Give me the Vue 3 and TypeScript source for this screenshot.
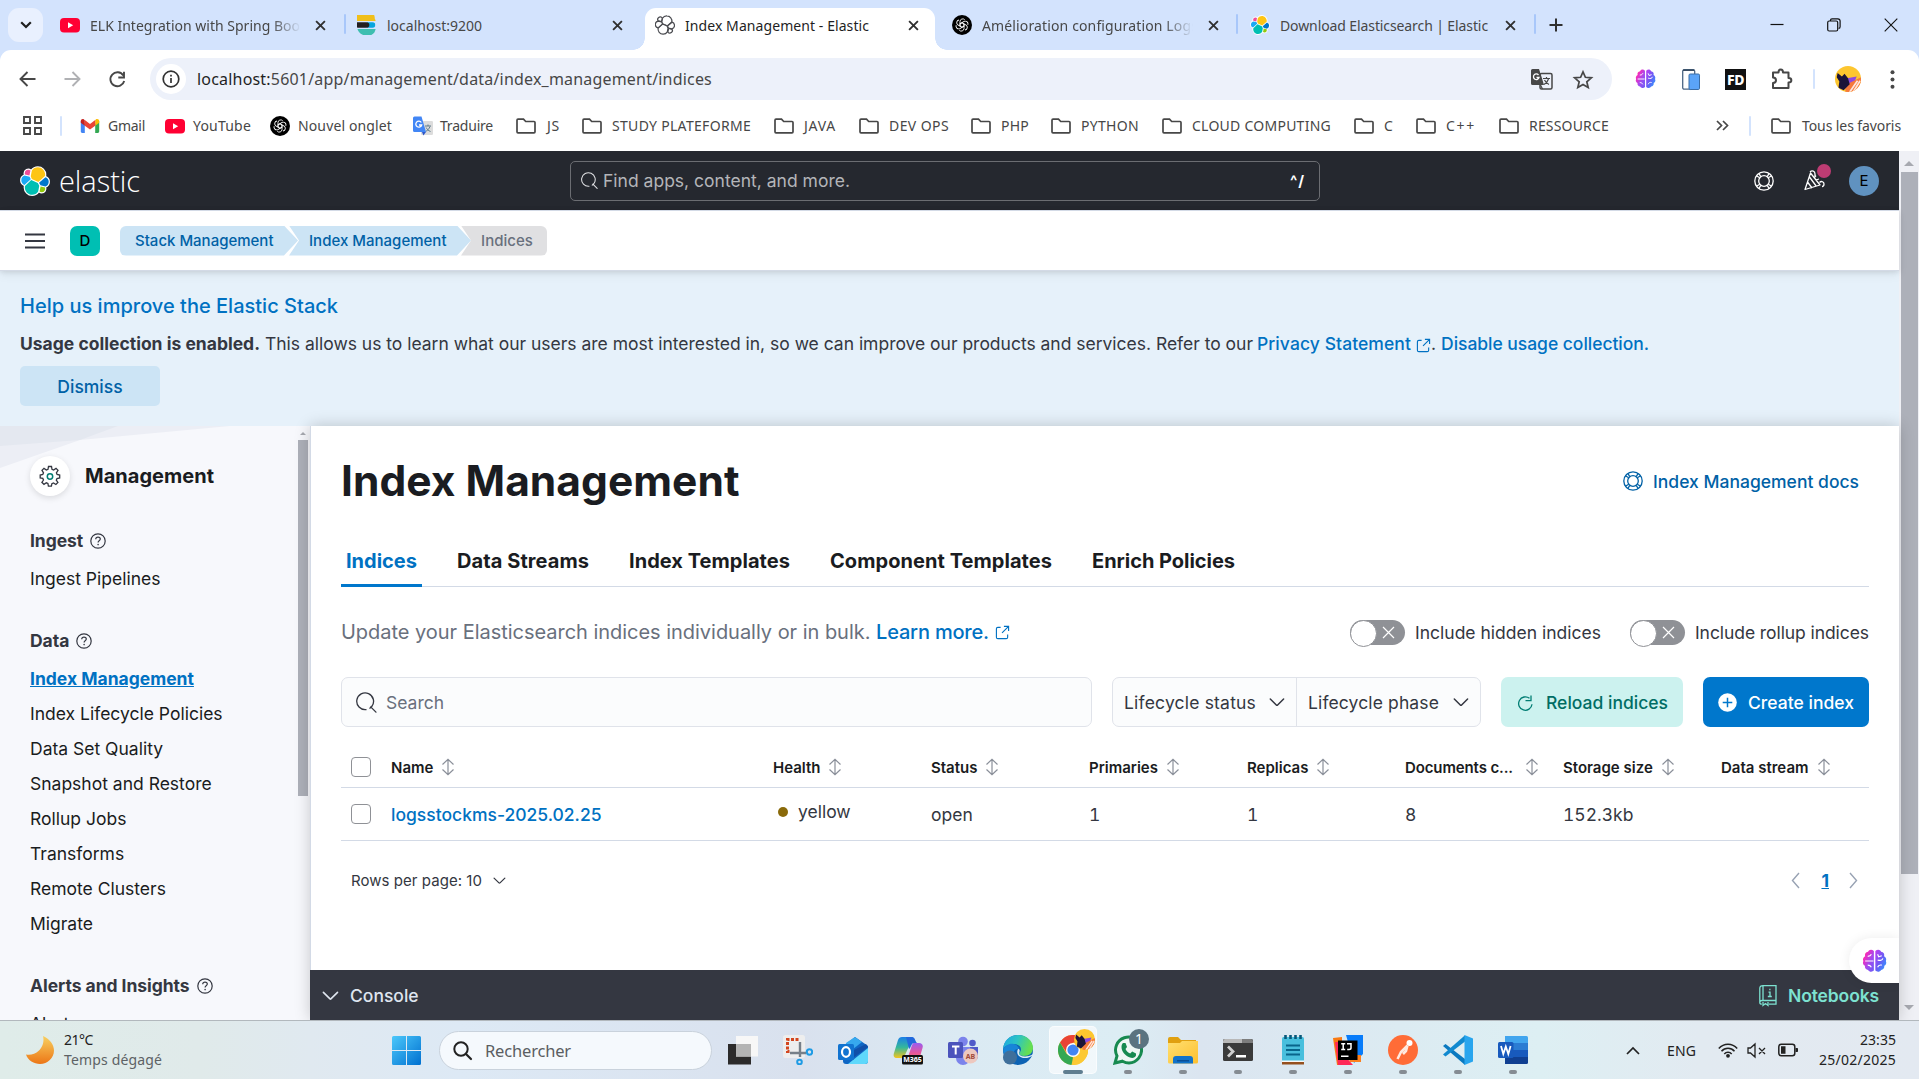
<script setup lang="ts">
interface Tab { title: string; icon: string; start: number; width: number; text: number; active?: boolean; faded?: boolean; line?: boolean }
interface Mark { label: string; icon: string; slot: number; gap: number; text: number }
interface Column { label: string; slot: number; value: string; kind?: string }
interface PageTab { label: string; text: number }

// Stretches or tightens a label's tracking so that it fills the given width.
const vFit = {
  mounted(el: HTMLElement, binding: { value: number }) {
    const natural = el.getBoundingClientRect().width
    const count = (el.textContent ?? '').trim().length
    if (count > 0 && natural > 0) el.style.letterSpacing = `${((binding.value - natural) / count).toFixed(3)}px`
  },
}

const tabs: Tab[] = [
  { title: 'ELK Integration with Spring Boo', icon: 'youtube', start: 11, width: 297, text: 210, faded: true, line: true },
  { title: 'localhost:9200', icon: 'es', start: 11, width: 299, text: 95 },
  { title: 'Index Management - Elastic', icon: 'cluster-line', start: 10, width: 290, text: 184, active: true },
  { title: 'Amélioration configuration Logs', icon: 'gpt', start: 17, width: 303, text: 216, faded: true, line: true },
  { title: 'Download Elasticsearch | Elastic', icon: 'cluster', start: 12, width: 298, text: 208, line: true },
]

const marks: Mark[] = [
  { label: 'Gmail', icon: 'gmail', slot: 85, gap: 8, text: 37 },
  { label: 'YouTube', icon: 'youtube', slot: 105, gap: 8, text: 58 },
  { label: 'Nouvel onglet', icon: 'gpt', slot: 143, gap: 8, text: 94 },
  { label: 'Traduire', icon: 'gtrans', slot: 103, gap: 7, text: 53 },
  { label: 'JS', icon: 'folder', slot: 66, gap: 11, text: 13 },
  { label: 'STUDY PLATEFORME', icon: 'folder', slot: 192, gap: 10, text: 139 },
  { label: 'JAVA', icon: 'folder', slot: 85, gap: 10, text: 32 },
  { label: 'DEV OPS', icon: 'folder', slot: 112, gap: 10, text: 60 },
  { label: 'PHP', icon: 'folder', slot: 80, gap: 10, text: 28 },
  { label: 'PYTHON', icon: 'folder', slot: 111, gap: 10, text: 58 },
  { label: 'CLOUD COMPUTING', icon: 'folder', slot: 192, gap: 10, text: 139 },
  { label: 'C', icon: 'folder', slot: 62, gap: 10, text: 9 },
  { label: 'C++', icon: 'folder', slot: 83, gap: 10, text: 30 },
  { label: 'RESSOURCE', icon: 'folder', slot: 217, gap: 10, text: 80 },
]

const dataLinks: string[] = ['Index Lifecycle Policies', 'Data Set Quality', 'Snapshot and Restore', 'Rollup Jobs', 'Transforms', 'Remote Clusters', 'Migrate']
const pageTabs: PageTab[] = [
  { label: 'Indices', text: 71 },
  { label: 'Data Streams', text: 132 },
  { label: 'Index Templates', text: 161 },
  { label: 'Component Templates', text: 222 },
  { label: 'Enrich Policies', text: 143 },
]

const columns: Column[] = [
  { label: 'Name', slot: 382, value: 'logsstockms-2025.02.25', kind: 'link' },
  { label: 'Health', slot: 158, value: 'yellow', kind: 'health' },
  { label: 'Status', slot: 158, value: 'open' },
  { label: 'Primaries', slot: 158, value: '1' },
  { label: 'Replicas', slot: 158, value: '1' },
  { label: 'Documents c...', slot: 158, value: '8', kind: 'wide' },
  { label: 'Storage size', slot: 158, value: '152.3kb' },
  { label: 'Data stream', slot: 148, value: '' },
]

const apps: string[] = ['taskview', 'snip', 'outlook', 'copilot', 'teams', 'edge', 'chrome', 'whatsapp', 'explorer', 'terminal', 'notepad', 'intellij', 'postman', 'vscode', 'word']
const running = (i: number): boolean => i > 6
</script>

<template>
  <div class="screen">
    <svg class="defs" width="0" height="0" aria-hidden="true">
      <defs>
        <linearGradient id="g-brain" x1="0" y1="0" x2="1" y2="1"><stop offset="0" stop-color="#ff8a1e" /><stop offset=".25" stop-color="#f32bbd" /><stop offset=".6" stop-color="#a04cf0" /><stop offset="1" stop-color="#6a5cf5" /></linearGradient>
        <linearGradient id="g-brain2" x1="0" y1="0" x2="1" y2="1"><stop offset="0" stop-color="#c13df0" /><stop offset=".5" stop-color="#6a5cf5" /><stop offset="1" stop-color="#22a6ff" /></linearGradient>
        <linearGradient id="g-win" x1="0" y1="0" x2="1" y2="1"><stop offset="0" stop-color="#4cc8fb" /><stop offset="1" stop-color="#0070d0" /></linearGradient>
        <linearGradient id="g-moon" x1="0" y1="0" x2="0" y2="1"><stop offset="0" stop-color="#f8d060" /><stop offset="1" stop-color="#ec7616" /></linearGradient>
        <linearGradient id="g-edge" x1="0" y1="0" x2="1" y2=".3"><stop offset="0" stop-color="#1ba4e4" /><stop offset=".5" stop-color="#2cc4c4" /><stop offset="1" stop-color="#66df50" /></linearGradient>
        <linearGradient id="g-cop" x1="0" y1="0" x2="0" y2="1"><stop offset="0" stop-color="#1b7fe8" /><stop offset=".5" stop-color="#35b89a" /><stop offset="1" stop-color="#f5c51c" /></linearGradient>
        <linearGradient id="g-cop2" x1="0" y1="0" x2="0" y2="1"><stop offset="0" stop-color="#9a5cf0" /><stop offset=".5" stop-color="#e8569c" /><stop offset="1" stop-color="#f88a50" /></linearGradient>
        <linearGradient id="g-folder" x1="0" y1="0" x2="1" y2="1"><stop offset="0" stop-color="#ffdf70" /><stop offset="1" stop-color="#fdc02f" /></linearGradient>
        <clipPath id="c-round"><circle cx="15" cy="15" r="15" /></clipPath>
        <clipPath id="c-es"><path d="M17.800 3A10 10 0 100 10a10 10 0 0017.800 7z" /><path d="M10 0A10 10 0 1018.500 15V5A10 10 0 0010 0z" /></clipPath>
      </defs>
      <symbol id="cluster" viewBox="0 0 32 32">
        <g stroke="#fff" stroke-width="2.6" fill="#fff"><path d="M12.58 13.787l7.002 3.211 7.066-6.213a7.849 7.849 0 00.152-1.557c0-4.287-3.477-7.775-7.75-7.775a7.74 7.74 0 00-6.4 3.4l-1.176 6.118z" /><path d="M5.333 21.228A7.964 7.964 0 005.18 22.8c0 4.3 3.487 7.797 7.774 7.797a7.76 7.76 0 006.429-3.415l1.166-6.1-1.556-2.985-7.03-3.215z" /><path d="M5.288 9.067l4.8 1.137L11.14 4.73a3.785 3.785 0 00-6.09 3.03 3.8 3.8 0 00.238 1.306z" /><path d="M4.872 10.214a5.294 5.294 0 00-3.492 4.98 5.287 5.287 0 003.394 4.94l6.733-6.11-1.236-2.653z" /><path d="M20.87 27.184a3.755 3.755 0 002.298.79 3.8 3.8 0 003.555-5.1l-4.798-1.125z" /><path d="M21.848 20.567l5.279 1.237a5.295 5.295 0 003.494-4.98 5.285 5.285 0 00-3.4-4.936l-6.904 6.069z" /></g>
        <path fill="#fec514" d="M12.58 13.787l7.002 3.211 7.066-6.213a7.849 7.849 0 00.152-1.557c0-4.287-3.477-7.775-7.75-7.775a7.74 7.74 0 00-6.4 3.4l-1.176 6.118z" />
        <path fill="#00bfb3" d="M5.333 21.228A7.964 7.964 0 005.18 22.8c0 4.3 3.487 7.797 7.774 7.797a7.76 7.76 0 006.429-3.415l1.166-6.1-1.556-2.985-7.03-3.215z" />
        <path fill="#f04e98" d="M5.288 9.067l4.8 1.137L11.14 4.73a3.785 3.785 0 00-6.09 3.03 3.8 3.8 0 00.238 1.306z" />
        <path fill="#1ba9f5" d="M4.872 10.214a5.294 5.294 0 00-3.492 4.98 5.287 5.287 0 003.394 4.94l6.733-6.11-1.236-2.653z" />
        <path fill="#93c90e" d="M20.87 27.184a3.755 3.755 0 002.298.79 3.8 3.8 0 003.555-5.1l-4.798-1.125z" />
        <path fill="#07c" d="M21.848 20.567l5.279 1.237a5.295 5.295 0 003.494-4.98 5.285 5.285 0 00-3.4-4.936l-6.904 6.069z" />
      </symbol>
      <symbol id="cluster-line" viewBox="0 0 32 32">
        <g fill="#fff" stroke="#4a4b50" stroke-width="1.9" stroke-linejoin="round"><path d="M12 14l7.600 3.400 7.300-6.400a8 8 0 00-7.800-9.500 7.900 7.900 0 00-7.100 3.700l-1.200 6z" /><path d="M5 21a8 8 0 007.900 9.600 7.800 7.800 0 006.800-3.600l1.200-6-1.600-3.300L12 14.500z" /><path d="M5.200 9.500l5.200 1.200 1.200-6.100A3.900 3.900 0 005.200 9.500z" /><path d="M5 9.800a5.500 5.500 0 00-.1 10.800L12 14.300l-1.500-3.300z" /><path d="M20.600 27.300A3.900 3.900 0 0027 22.500l-5.200-1.200z" /><path d="M21.600 21l5.600 1.200a5.600 5.600 0 00.1-10.700L20 17.700z" /></g>
      </symbol>
      <symbol id="es" viewBox="0 0 20 20"><g clip-path="url(#c-es)"><path fill="#f0bf1a" d="M0 0h20v6H0z" /><path fill="#07a5de" d="M10 7.200h5.500a2.800 2.800 0 010 5.600H10z" /><path fill="#231f20" d="M0 7.200h9.500a2.800 2.800 0 010 5.600H0z" /><path fill="#3ebeb0" d="M0 14h20v6H0z" /></g></symbol>
      <symbol id="youtube" viewBox="0 0 20 20"><rect y="3" width="20" height="14.500" rx="4" fill="#ff0033" /><path fill="#fff" d="M8 7.200l5.200 3L8 13.300z" /></symbol>
      <symbol id="gpt" viewBox="0 0 20 20"><circle cx="10" cy="10" r="10" fill="#000" /><g fill="none" stroke="#fff" stroke-width=".9"><path d="M8 6.400V11.100l2 1.200M8 6.400a2.700 2.700 0 014.800-1.500" /><path transform="rotate(60 10 10)" d="M8 6.400V11.100l2 1.200M8 6.400a2.700 2.700 0 014.800-1.500" /><path transform="rotate(120 10 10)" d="M8 6.400V11.100l2 1.200M8 6.400a2.700 2.700 0 014.800-1.500" /><path transform="rotate(180 10 10)" d="M8 6.400V11.100l2 1.200M8 6.400a2.700 2.700 0 014.800-1.500" /><path transform="rotate(240 10 10)" d="M8 6.400V11.100l2 1.200M8 6.400a2.700 2.700 0 014.800-1.500" /><path transform="rotate(300 10 10)" d="M8 6.400V11.100l2 1.200M8 6.400a2.700 2.700 0 014.800-1.500" /></g></symbol>
      <symbol id="gmail" viewBox="0 0 20 20"><path fill="#4285f4" d="M.8 5v10.600c0 .8.6 1.400 1.400 1.400h2.600V8z" /><path fill="#34a853" d="M15.200 8v9h2.600c.8 0 1.400-.6 1.400-1.400V5z" /><path fill="#fbbc04" d="M15.200 4.300v5.400l4-3V5c0-1.900-2-2.600-3.200-1.700z" /><path fill="#c5221f" d="M.8 5v1.700l4 3V4.300L4 3.500C2.800 2.500.8 3.200.8 5z" /><path fill="#ea4335" d="M4.800 9.700V4l5.200 4 5.200-4v5.700L10 13.600z" /></symbol>
      <symbol id="gtrans" viewBox="0 0 20 20"><rect x="8" y="5" width="12" height="14" rx="1.200" fill="#dcdcdc" /><path d="M12 10h6M15 8.500V10M17 10.500c-1 2.500-2.500 4-4.500 5M13.200 11.500c.8 1.800 2 3 4.300 4" stroke="#607d8b" fill="none" /><path fill="#4286f5" d="M1.500.5h7L13 16H1.500A1.500 1.500 0 010 14.500V2A1.500 1.500 0 011.500.5z" /><path fill="#3059c9" d="M9 16h4l-2.600 3.500z" /><path d="M8.300 6.500A3 3 0 108.700 9H6" stroke="#fff" stroke-width="1.300" fill="none" /></symbol>
      <symbol id="folder" viewBox="0 0 20 20"><path d="M1 4.200c0-.6.4-1 1-1h5.500l2.200 2.300H18c.6 0 1 .4 1 1v9.300c0 .6-.4 1-1 1H2c-.6 0-1-.4-1-1z" fill="none" stroke="#474747" stroke-width="1.700" /></symbol>
      <symbol id="brain" viewBox="0 0 24 24"><path fill="url(#g-brain)" d="M11.400 2.500C9.500.6 6.600 1 5.800 3.200 3.500 3.400 2.300 5.500 3 7.400 1 8.500.5 10.600 1.300 12 .4 13.800 1 15.700 2.800 16.600c-.3 2.400 1.300 3.900 3 4 1.200 2 4 2.300 5.600.6z" /><path fill="url(#g-brain2)" d="M12.800 2.500c1.900-1.900 4.800-1.500 5.600.7 2.300.2 3.500 2.300 2.800 4.200 2 1.100 2.500 3.200 1.700 4.600.9 1.800.3 3.700-1.500 4.600.3 2.400-1.300 3.900-3 4-1.200 2-4 2.300-5.600.6z" /><path d="M3 12h8M5.500 7.500c2 0 3-.8 3.500-2M5.500 16c1.500 0 3 1 3.500 2M15 5.500l1 2.500 3-1M15 11c2.500 1 4.500.3 5-1.500M15 18c.5-1.500 2-2.500 4-2" fill="none" stroke="#fff" stroke-width="1.100" /></symbol>
      <symbol id="buoy" viewBox="0 0 20 20"><g fill="none" stroke="currentColor" stroke-width="1.300"><circle cx="10" cy="10" r="9.200" /><circle cx="10" cy="10" r="5.300" /><path d="M4.800 2.400l2 3.200M2.400 4.800l3.300 2M15.200 2.400l-2 3.200M17.600 4.800l-3.300 2M4.800 17.600l2-3.200M2.400 15.200l3.300-2M15.200 17.600l-2-3.200M17.600 15.200l-3.300-2" /></g></symbol>
      <symbol id="sort" viewBox="0 0 14 18"><path d="M7 1.500v15M1.500 6.500L7 1.300l5.500 5.200M1.500 11.500L7 16.700l5.500-5.200" fill="none" stroke="#8a8f99" stroke-width="1.200" /></symbol>
      <symbol id="ask" viewBox="0 0 16 16"><g fill="none" stroke="currentColor" stroke-width="1.200"><circle cx="8" cy="8" r="7.200" /><path d="M5.700 6.200C5.800 4.900 6.700 4.200 8 4.200s2.300.8 2.300 1.900c0 1.700-2.200 1.600-2.200 3.300" /></g><circle cx="8.100" cy="11.600" r=".8" fill="currentColor" /></symbol>
      <symbol id="popout" viewBox="0 0 16 16"><path d="M6 2.500H3C2 2.500 1.500 3 1.500 4v9c0 1 .5 1.500 1.500 1.500h9c1 0 1.500-.5 1.500-1.500v-3M9.500 1.500h5v5M14.500 1.500L7.500 8.500" fill="none" stroke="currentColor" stroke-width="1.200" /></symbol>
      <symbol id="down" viewBox="0 0 16 16"><path d="M1.300 5l6 6c.4.4.9.4 1.300 0l6-6" fill="none" stroke="currentColor" stroke-width="1.500" stroke-linecap="round" /></symbol>
      <symbol id="lens" viewBox="0 0 20 20"><path d="M9.500 16.800A8 8 0 1115 13.800M15 13.800l-1.800 1.600M14 14.200l5 5" fill="none" stroke="currentColor" stroke-width="1.250" stroke-linecap="round" /></symbol>
      <symbol id="x" viewBox="0 0 10 10"><path d="M1 1l8 8M9 1L1 9" fill="none" stroke="#303030" stroke-width="1.700" /></symbol>
      <symbol id="face" viewBox="0 0 30 30"><g clip-path="url(#c-round)"><path fill="#fdc62f" d="M0 0h30v30H0z" /><path fill="#8d4ae0" d="M9 15l16-3-3 8H9z" /><path fill="#f67a3c" d="M12 22l18-9v17H12z" /><path d="M17 30l9-13M21 30l8-13" stroke="#ffe6dc" stroke-width="2" /><path fill="#1c1438" d="M3 8l5 4 3-3 4 5 2 7-3 3-4 4-6-3 1-7-3-5z" /></g></symbol>

      <symbol id="taskview" viewBox="0 0 30 30"><path fill="#2c2b2b" d="M0 9h23v20.500H0z" /><path fill="#f7f7f7" d="M8 1h22v20.500H8z" /><path fill="#b4b4b4" d="M8 9h15v12.500H8z" /></symbol>
      <symbol id="snip" viewBox="0 0 30 30"><rect width="22" height="23" rx="2.500" fill="#eeeeee" /><path d="M15.500 4.500H4.500v12h2" fill="none" stroke="#d3451e" stroke-width="3" stroke-dasharray="3 1.500" /><path d="M17 7v15M7 18h16" stroke="#777f88" stroke-width="2.400" /><circle cx="26.500" cy="17" r="2.700" fill="none" stroke="#1e9be4" stroke-width="2" /><circle cx="16.500" cy="27" r="2.300" fill="none" stroke="#1e9be4" stroke-width="2" /></symbol>
      <symbol id="outlook" viewBox="0 0 30 30"><path fill="#0f66c4" d="M5 11L17 2l13 9v15a3 3 0 01-3 3H8a3 3 0 01-3-3z" /><path fill="#36a9ee" d="M8 8l9-6 7 5-14 11z" /><path fill="#5fd8fb" d="M30 13v13a3 3 0 01-3 3H10z" /><path fill="#104fa8" d="M10 18L28 9l2 3-15 11z" /><rect y="9" width="16" height="16" rx="1.500" fill="#1173d0" /><ellipse cx="8" cy="17" rx="4" ry="4.800" fill="none" stroke="#fff" stroke-width="2.200" /></symbol>
      <symbol id="copilot" viewBox="0 0 30 30"><path fill="url(#g-cop)" d="M9 2h9c2 0 3 1 3.500 3L17 9l-5 11c-1 2-2 3-4 3H4c-3 0-4-2-3-5L5 5c.7-2 2-3 4-3z" /><path fill="url(#g-cop2)" d="M21 8h5c3 0 4.500 2 3.500 5L26 25c-.7 2-2 3-4 3h-9l5-15c1-3 1.500-5 3-5z" /><path fill="#2269dc" d="M13 2h6c3 0 3 4 5 6h-3c-3 0-3 5-5 6z" /><rect x="9" y="20" width="21" height="9.500" rx="1.500" fill="#111" /></symbol>
      <symbol id="teams" viewBox="0 0 30 30"><circle cx="15" cy="6.500" r="4.800" fill="#7b83eb" /><circle cx="24.500" cy="8" r="3.300" fill="#5059c9" /><path fill="#5059c9" d="M18 12h12v9a6 6 0 01-9 5z" /><path fill="#7b83eb" d="M8 12h14v11a7 7 0 01-14 0z" /><rect y="7" width="15" height="16" rx="1.500" fill="#4b53bc" /><path d="M4 11.500h7.400M7.700 11.500v8" stroke="#fff" stroke-width="2" /><circle cx="22.500" cy="21" r="7.500" fill="#edc8bf" /></symbol>
      <symbol id="edge" viewBox="0 0 30 30"><circle cx="15" cy="15" r="15" fill="#0d63b4" /><path fill="url(#g-edge)" d="M0 14C1 5 7 0 15 0c9 0 15 6 15 13 0 5-4 8-9 8-4 0-6-2-4-4 3-4-1-8-6-8-6 0-10 3-11 5z" /><path fill="#1885d8" d="M0 15c2-5 7-7 11-6 3 1 5 3 5 5-5-1-8 5-3 11-7 2-12-3-13-10z" /><path fill="#dcecf4" d="M15 14c2 0 2 2 1 4 0 2 2 3.500 6 3.500 3 0 5.500-.5 8.500-2.500-2 3-5 4-9 4-5 0-9-4-6.500-9z" /><circle cx="7" cy="22.500" r="7" fill="#3f6f9b" /></symbol>
      <symbol id="chrome" viewBox="0 0 30 30"><circle cx="15" cy="15" r="15" fill="#fcc934" /><path fill="#ea4335" d="M2 7.500A15 15 0 0128 7.500H15L9 18z" /><path fill="#34a853" d="M2 7.500L8.500 18.800 15 22.500 13.500 30A15 15 0 012 7.500z" /><path fill="#fcc934" d="M28 7.500A15 15 0 0114 30l7.500-11.300V7.500z" /><circle cx="15" cy="15" r="7" fill="#fff" /><circle cx="15" cy="15" r="5.600" fill="#4285f4" /></symbol>
      <symbol id="whatsapp" viewBox="0 0 30 30"><path d="M2 28l2-7A13 13 0 1116 28c-2.500 0-4.500-.7-6.500-1.800z" fill="#eef7f4" stroke="#178a50" stroke-width="3" /><path fill="#178a50" d="M10 8h2.500l1.500 4-1.500 2c1 2.200 2.500 3.600 4.700 4.500l2-2 3.800 2v2c-.8 2.200-3.500 3-6 2-5-2-8.500-6-8.500-10.500 0-1.700.5-3 1.500-4z" /></symbol>
      <symbol id="explorer" viewBox="0 0 30 30"><path fill="#e0a010" d="M0 4a2 2 0 012-2h8l3 3h15v8H0z" /><path fill="url(#g-folder)" d="M0 8h12l2-2h16v21a1.500 1.500 0 01-1.500 1.500h-27A1.500 1.500 0 010 27z" /><path fill="#1273ca" d="M5 28.500V24a3 3 0 013-3h14a3 3 0 013 3v4.500z" /><path fill="#0b4f96" d="M9 25h12v1.500H9z" /></symbol>
      <symbol id="terminal" viewBox="0 0 30 30"><rect y="4" width="30" height="22" rx="1.500" fill="#3a3a3a" /><path fill="#b8b8b8" d="M1.500 4h18v4H0V5.500z" /><path fill="#7d7d7d" d="M19.500 4h9L30 5.500V8H19.500z" /><path d="M5 11.500l5 5-5 5" fill="none" stroke="#d0d0d0" stroke-width="2.800" /><path fill="#fff" d="M13 20h10v2.500H13z" /></symbol>
      <symbol id="notepad" viewBox="0 0 30 30"><rect x="4" y="2" width="22" height="27" rx="1.500" fill="#48bfdd" /><path fill="#f8f8f8" d="M4 25.500h22V27H4z" /><path fill="#95501f" d="M4 27h22v2.500H4z" /><path d="M8 10.500h14M8 15h14M8 19.500h14" stroke="#08658b" stroke-width="1.800" /><path d="M7.500 0v4M12.500 0v4M17.500 0v4M22.500 0v4" stroke="#08587a" stroke-width="2.600" /></symbol>
      <symbol id="intellij" viewBox="0 0 30 30"><path fill="#f97a12" d="M0 3l9-1v28H4z" /><path fill="#fe2857" d="M2 7h10v14l8 9H5z" /><path fill="#087cfa" d="M13 0h17v19l-9 9z" /><path fill="#fc801d" d="M14 20h14v7H17z" /><path d="M5 5.500h19.500v19.500H5z" /><path fill="#fff" d="M8 20.500h7.500V22H8z" /><path d="M8.200 8.800h4M8.200 14.500h4M10.200 8.800v5.700M14 8.800h4v4.300c0 1-.7 1.500-2 1.500h-1.800" fill="none" stroke="#fff" stroke-width="1.500" /></symbol>
      <symbol id="postman" viewBox="0 0 30 30"><circle cx="15" cy="15" r="15" fill="#ff6c37" /><circle cx="21.500" cy="8" r="3" fill="#fff" /><path d="M19.500 10.500L13 17l-3.500 7M19.500 10.500L18 16l-3 3" stroke="#ffeae0" stroke-width="2.500" fill="none" /></symbol>
      <symbol id="vscode" viewBox="0 0 30 30"><path fill="#0a79c0" d="M0 11l2.500-2L22 24v6z" /><path fill="#1089cf" d="M0 19.500l2.500 2L22 6.500V.3z" /><path fill="#28a5ee" d="M21.500 0L30 3.500v23L21.500 30z" /></symbol>
      <symbol id="word" viewBox="0 0 30 30"><path fill="#41a5ee" d="M7 1h21.500a1.500 1.500 0 011.500 1.500V8H7z" /><path fill="#2b7cd3" d="M7 8h23v7H7z" /><path fill="#185abd" d="M7 15h23v7H7z" /><path fill="#103f91" d="M7 22h23v5.500a1.500 1.500 0 01-1.500 1.500H7z" /><rect y="7" width="15.500" height="16" rx="1.500" fill="#185abd" /><path d="M3 11l2.300 8 2.500-7.500 2.500 7.500 2.300-8" fill="none" stroke="#fff" stroke-width="1.800" /></symbol>
    </svg>

    <header class="tabstrip">
      <button class="tab-menu"><svg width="12" height="8" viewBox="0 0 12 8"><path d="M1.200 1.200L6 6l4.800-4.800" fill="none" stroke="#1f1f1f" stroke-width="2.200" /></svg></button>
      <div v-for="t in tabs" :key="t.title" class="tab" :class="{ active: t.active }" :style="{ width: t.width + 'px', paddingLeft: t.start + 'px' }">
        <svg class="favicon"><use :href="'#' + t.icon" /></svg>
        <span class="tab-title" :class="{ faded: t.faded }"><span v-fit="t.text" class="fit">{{ t.title }}</span></span>
        <svg class="tab-close" width="11" height="11"><use href="#x" /></svg>
        <i v-if="t.line" class="tab-line" />
      </div>
      <svg class="plus" width="14" height="14" viewBox="0 0 14 14"><path d="M7 .5v13M.5 7h13" stroke="#303030" stroke-width="2" /></svg>
      <div class="window-buttons">
        <svg width="14" height="14" viewBox="0 0 14 14"><path d="M.5 6.500h13" stroke="#111" stroke-width="1.200" /></svg>
        <svg width="14" height="14" viewBox="0 0 14 14"><g fill="none" stroke="#111" stroke-width="1.200"><rect x=".7" y="3" width="10" height="10" rx="1.500" /><path d="M3.500 3V2.200C3.500 1.300 4 .8 5 .8h5.800c1.500 0 2.300.9 2.300 2.300v5.700c0 1-.6 1.600-1.500 1.600" /></g></svg>
        <svg width="14" height="14" viewBox="0 0 14 14"><path d="M.7.7l12.600 12.600M13.300.7L.7 13.300" stroke="#111" stroke-width="1.100" /></svg>
      </div>
    </header>

    <div class="toolbar">
      <svg class="nav-back" width="17" height="16" viewBox="0 0 17 16"><path d="M16.500 8H1.500M8.500 1L1.500 8l7 7" fill="none" stroke="#474747" stroke-width="1.900" /></svg>
      <svg class="nav-next" width="17" height="16" viewBox="0 0 17 16"><path d="M.5 8h15M8.500 1l7 7-7 7" fill="none" stroke="#b0b1b4" stroke-width="1.900" /></svg>
      <svg class="nav-reload" width="17" height="17" viewBox="0 0 17 17"><path d="M14.300 4.500A7 7 0 1015.200 10M15 .8v5.700H9.300" fill="none" stroke="#474747" stroke-width="1.900" /></svg>
      <div class="omnibox">
        <span class="site-info"><svg width="18" height="18" viewBox="0 0 18 18"><circle cx="9" cy="9" r="7.800" fill="none" stroke="#333" stroke-width="1.700" /><path d="M9 8v5M9 4.800v1.700" stroke="#333" stroke-width="1.700" /></svg></span>
        <span v-fit="515" class="url"><b>localhost:</b>5601/app/management/data/index_management/indices</span>
        <svg class="translate" width="22" height="21" viewBox="0 0 22 21"><rect x="9" y="4.500" width="12" height="15.500" rx="1.500" fill="none" stroke="#474747" stroke-width="1.500" /><path fill="#474747" d="M1.500 0H8l1.500 4.500L13 16H1.500A1.500 1.500 0 010 14.500v-13A1.500 1.500 0 011.500 0z" /><path d="M7.500 6A2.800 2.800 0 108 8.500H5.500" fill="none" stroke="#fff" stroke-width="1.300" /><path d="M12 9.500h7M15.500 8v1.500M17.500 10c-1 3-2.500 4.500-4.500 5.500M13.500 11c1 2 2.300 3.500 4.500 4.500M9.500 16l2 4" fill="none" stroke="#474747" stroke-width="1.200" /></svg>
        <svg class="star" width="20" height="19" viewBox="0 0 20 19"><path d="M10 1.800l2.400 5.500 6 .5-4.600 4 1.400 5.800L10 14.500l-5.200 3.100 1.400-5.800-4.600-4 6-.5z" fill="none" stroke="#474747" stroke-width="1.700" /></svg>
      </div>
      <svg class="ext-brain" width="21" height="22"><use href="#brain" /></svg>
      <svg class="ext-phone" width="18" height="21" viewBox="0 0 18 21"><rect x=".7" y=".7" width="12" height="19.500" rx="1.500" fill="#fff" stroke="#4c6684" stroke-width="1.300" /><path d="M1 1.200h11" stroke="#31455c" stroke-width="1.500" /><rect x="7" y="5" width="10.500" height="15.500" rx="1.200" fill="#5ba4f8" stroke="#3b6da5" /></svg>
      <span class="ext-fd">FD</span>
      <svg class="ext-puzzle" width="22" height="22" viewBox="0 0 22 22"><path d="M2 4.500h5.500c0-4 4.500-4 4.500 0h5.500V10c3.800 0 3.800 4.500 0 4.500v5.500H2v-5c4-.3 4-5.200 0-5.500z" fill="none" stroke="#474747" stroke-width="2" stroke-linejoin="round" /></svg>
      <i class="bar-line" />
      <svg class="profile" width="26" height="26"><use href="#face" /></svg>
      <svg class="dots" width="5" height="19" viewBox="0 0 5 19"><g fill="#474747"><circle cx="2.500" cy="2.300" r="2" /><circle cx="2.500" cy="9.500" r="2" /><circle cx="2.500" cy="16.700" r="2" /></g></svg>
    </div>

    <nav class="bookmarks">
      <svg class="apps" width="19" height="19" viewBox="0 0 19 19"><g fill="none" stroke="#474747" stroke-width="1.900"><path d="M1 1h6v6H1zM12 1h6v6h-6zM1 12h6v6H1zM12 12h6v6h-6z" /></g></svg>
      <i class="bar-line" />
      <div v-for="m in marks" :key="m.label" class="mark" :style="{ width: m.slot + 'px', columnGap: m.gap + 'px' }">
        <svg width="20" height="20"><use :href="'#' + m.icon" /></svg><span v-fit="m.text" class="fit">{{ m.label }}</span>
      </div>
      <svg class="more" width="13" height="11" viewBox="0 0 13 11"><path d="M1 1l4.500 4.500L1 10M7 1l4.500 4.500L7 10" fill="none" stroke="#474747" stroke-width="1.700" /></svg>
      <i class="bar-line last" />
      <div class="mark all"><svg width="20" height="20"><use href="#folder" /></svg><span v-fit="99" class="fit">Tous les favoris</span></div>
    </nav>

    <div class="viewport">
      <div class="page">
        <div class="topbar">
          <svg class="logo" width="30" height="30"><use href="#cluster" /></svg>
          <span class="brand"><span v-fit="81" class="fit">elastic</span></span>
          <div class="global-search">
            <svg width="17" height="17"><use href="#lens" /></svg><span v-fit="247" class="fit">Find apps, content, and more.</span><b>^/</b>
          </div>
          <svg class="help" width="20" height="20"><use href="#buoy" /></svg>
          <div class="news">
            <svg width="21" height="21" viewBox="0 0 21 21"><g fill="none" stroke="#fff" stroke-width="1.300" stroke-linejoin="round"><path d="M6.500 3L1 19.500l15-4.500zM5.500 7l7 9.500M3.500 12l4.500 6M6 2c2-2 5-1 5 2v2M10 8l2-2.500M12 10l3-1M15.500 12.500c2-2 4.500-.5 4.500 1.500 0 1.500-1 2.500-2 2.500" /></g></svg><i />
          </div>
          <span class="user">E</span>
        </div>

        <div class="crumbbar">
          <svg class="burger" width="20" height="16" viewBox="0 0 20 16"><path d="M0 1.500h20M0 8h20M0 14.500h20" stroke="#343741" stroke-width="2.200" /></svg>
          <span class="space">D</span>
          <div class="crumbs">
            <span class="crumb first"><span v-fit="138.500" class="fit">Stack Management</span></span>
            <span class="crumb mid"><span v-fit="137.500" class="fit">Index Management</span></span>
            <span class="crumb end"><span v-fit="52" class="fit">Indices</span></span>
          </div>
        </div>

        <section class="banner">
          <h2><span v-fit="318" class="fit">Help us improve the Elastic Stack</span></h2>
          <p><b v-fit="240">Usage collection is enabled.</b><span v-fit="988" class="body">This allows us to learn what our users are most interested in, so we can improve our products and services. Refer to our</span><a v-fit="154">Privacy Statement</a><svg width="15" height="15"><use href="#popout" /></svg><span class="stop">.</span><a v-fit="208">Disable usage collection.</a></p>
          <button>Dismiss</button>
        </section>

        <div class="split">
          <aside class="side">
            <svg class="art" width="230" height="45" viewBox="0 0 230 45"><path fill="#eceef5" d="M0 0h230L80 14 0 42z" /><path fill="#e4e8f0" d="M0 0h118L80 14 0 20z" /></svg>
            <div class="side-scroll"><span /><i /></div>
            <div class="side-body">
              <div class="side-head">
                <span class="gear"><svg width="22" height="22" viewBox="0 0 22 22"><path d="M9.500 1.500h3l.5 2.800 1.600.7 2.400-1.600 2 2-1.600 2.400.7 1.700 2.600.5v3l-2.700.5-.7 1.600 1.600 2.300-2 2.100-2.400-1.600-1.600.7-.5 2.600h-3l-.5-2.700-1.600-.7L5 19.400l-2.100-2.100L4.500 15l-.7-1.600L1.200 13v-3l2.600-.5.7-1.700L3 5.400l2-2L7.400 5 9 4.300z" fill="none" stroke="#343741" stroke-width="1.300" /><circle cx="11" cy="11.500" r="2.700" fill="none" stroke="#017d73" stroke-width="1.500" /></svg></span>
                <span class="side-title"><span v-fit="129" class="fit">Management</span></span>
              </div>
              <h3 class="g1">Ingest<svg width="16" height="16"><use href="#ask" /></svg></h3>
              <a>Ingest Pipelines</a>
              <h3 class="g2">Data<svg width="16" height="16"><use href="#ask" /></svg></h3>
              <a class="current">Index Management</a>
              <a v-for="l in dataLinks" :key="l">{{ l }}</a>
              <h3 class="g3">Alerts and Insights<svg width="16" height="16"><use href="#ask" /></svg></h3>
              <a>Alerts</a>
            </div>
          </aside>

          <div class="panel">
            <main class="content">
              <div class="title-row">
                <h1><span v-fit="398.500" class="fit">Index Management</span></h1>
                <a class="docs"><svg width="20" height="20"><use href="#buoy" /></svg><span v-fit="206" class="fit">Index Management docs</span></a>
              </div>
              <div class="page-tabs"><span v-for="(p, i) in pageTabs" :key="p.label" :class="{ on: i === 0 }"><em v-fit="p.text" class="fit">{{ p.label }}</em></span></div>
              <div class="intro">
                <p><span v-fit="535" class="body">Update your Elasticsearch indices individually or in bulk. </span><a><span v-fit="113" class="fit">Learn more.</span><svg width="15" height="15"><use href="#popout" /></svg></a></p>
                <label><i class="switch"><svg width="13" height="13" viewBox="0 0 13 13"><path d="M1 1l11 11M12 1L1 12" stroke="#fff" stroke-width="1.200" /></svg></i><span v-fit="186" class="fit">Include hidden indices</span></label>
                <label><i class="switch"><svg width="13" height="13" viewBox="0 0 13 13"><path d="M1 1l11 11M12 1L1 12" stroke="#fff" stroke-width="1.200" /></svg></i><span v-fit="174" class="fit">Include rollup indices</span></label>
              </div>
              <div class="filters">
                <div class="find"><svg width="21" height="21"><use href="#lens" /></svg>Search</div>
                <div class="group">
                  <span><em v-fit="132">Lifecycle status</em><svg width="16" height="16"><use href="#down" /></svg></span>
                  <span><em v-fit="131">Lifecycle phase</em><svg width="16" height="16"><use href="#down" /></svg></span>
                </div>
                <button class="reload"><svg width="17" height="17" viewBox="0 0 17 17"><path d="M15 9.500A6.700 6.700 0 1112.500 3.500M8.500 5.800H14V.8" fill="none" stroke="#017d73" stroke-width="1.300" transform="translate(0 .8)" /></svg><span v-fit="122" class="fit">Reload indices</span></button>
                <button class="create"><svg width="19" height="19" viewBox="0 0 19 19"><circle cx="9.500" cy="9.500" r="9.300" fill="#fff" /><path d="M9.500 4.700v9.600M4.700 9.500h9.600" stroke="#07c" stroke-width="1.500" /></svg><span v-fit="106" class="fit">Create index</span></button>
              </div>
              <div class="table">
                <div class="tr head"><i class="box" /><span v-for="c in columns" :key="c.label" :class="c.kind" :style="{ width: c.slot + 'px' }">{{ c.label }}<svg width="14" height="18"><use href="#sort" /></svg></span></div>
                <div class="tr row"><i class="box" /><span v-for="c in columns" :key="c.label" :class="c.kind" :style="{ width: c.slot + 'px' }"><i v-if="c.kind === 'health'" class="dot" />{{ c.value }}</span></div>
              </div>
              <div class="pager">
                <span class="rows">Rows per page: 10<svg width="13" height="13"><use href="#down" /></svg></span>
                <svg width="9" height="17" viewBox="0 0 9 17"><path d="M8 1L1.500 8.500 8 16" fill="none" stroke="#98a2b3" stroke-width="1.400" /></svg>
                <b>1</b>
                <svg width="9" height="17" viewBox="0 0 9 17"><path d="M1 1l6.500 7.500L1 16" fill="none" stroke="#98a2b3" stroke-width="1.400" /></svg>
              </div>
            </main>
            <div class="console">
              <svg width="17" height="17"><use href="#down" /></svg><span>Console</span>
              <svg class="book" width="18" height="21" viewBox="0 0 18 21"><path d="M4 .7h13v18.500H10M4 .7C2 .7.8 1.500.8 3.500v14c0 1 .7 1.700 2 1.700M4 .7v15M1 17c0-1 .8-1.500 2-1.500h14M4 17v3.500l2.500-2 2.500 2V17M9.500 7.200h1.500v4.300M8.800 11.500h4M10.300 4.500h1.200" fill="none" stroke="#7de2d1" stroke-width="1.300" /></svg>
              <span class="note"><span v-fit="91" class="fit">Notebooks</span></span>
            </div>
            <div class="assistant"><svg width="25" height="26"><use href="#brain" /></svg></div>
          </div>
        </div>
      </div>
      <div class="scrollbar"><span class="up" /><i /><span class="dn" /></div>
    </div>

    <footer class="taskbar">
      <svg class="moon" width="28" height="28" viewBox="0 0 28 28"><path fill="url(#g-moon)" d="M17 0c7 3 11 9 11 14.500C28 22 21.500 28 14 28 8 28 2 24.500 0 18.500c4 .8 9 0 13-4C17 10.500 18.300 5 17 0z" /></svg>
      <div class="weather"><span v-fit="29" class="fit">21°C</span><span v-fit="98" class="fit sub">Temps dégagé</span></div>
      <svg class="start" width="29" height="29" viewBox="0 0 29 29"><path fill="url(#g-win)" d="M0 1.500A1.500 1.500 0 011.500 0H14v14H0zM15 0h12.500A1.500 1.500 0 0129 1.500V14H15zM0 15h14v14H1.500A1.500 1.500 0 010 27.500zM15 15h14v12.500a1.500 1.500 0 01-1.500 1.500H15z" /></svg>
      <div class="task-search"><svg width="19" height="19" viewBox="0 0 19 19"><circle cx="8" cy="8" r="6.700" fill="none" stroke="#222" stroke-width="2" /><path d="M13 13l5 5" stroke="#222" stroke-width="2.200" stroke-linecap="round" /></svg><span v-fit="86" class="fit">Rechercher</span></div>
      <div class="apps-row">
        <div v-for="(a, i) in apps" :key="a" class="app" :class="[a, { running: running(i) }]">
          <svg width="30" height="30"><use :href="'#' + a" /></svg>
          <span v-if="a === 'copilot'" class="m365">M365</span>
          <span v-if="a === 'teams'" class="ab">AB</span>
          <svg v-if="a === 'chrome'" class="mini"><use href="#face" /></svg>
          <span v-if="a === 'whatsapp'" class="count">1</span>
          <i class="mark-run" />
        </div>
      </div>
      <svg class="caret" width="14" height="9" viewBox="0 0 14 9"><path d="M1 8l6-6 6 6" fill="none" stroke="#222" stroke-width="1.700" /></svg>
      <span class="lang"><span v-fit="29" class="fit">ENG</span></span>
      <svg class="wifi" width="20" height="15" viewBox="0 0 20 15"><g fill="none" stroke="#222" stroke-width="1.500"><path d="M.8 5.500C5.800-.2 14.200-.2 19.200 5.500M3.500 8.300c3.500-4 9.500-4 13 0M6.300 11c2-2.300 5.400-2.300 7.400 0" /></g><circle cx="10" cy="12.800" r="1.900" fill="#222" /></svg>
      <svg class="mute" width="20" height="15" viewBox="0 0 20 15"><path d="M1 5v5h2.500L8 14V1L3.500 5zM12 5l6 6M18 5l-6 6" fill="none" stroke="#222" stroke-width="1.300" /></svg>
      <svg class="battery" width="20" height="14" viewBox="0 0 20 14"><rect x=".8" y="1.300" width="16" height="11.400" rx="2.500" fill="none" stroke="#222" stroke-width="1.500" /><path fill="#222" d="M3 3.300h4.500v7.400H3zM17.500 5H19c.6 0 1 .4 1 1v2c0 .6-.4 1-1 1h-1.500z" /></svg>
      <div class="clock"><span v-fit="36" class="fit">23:35</span><span v-fit="77" class="fit">25/02/2025</span></div>
    </footer>
  </div>
</template>

<style>
html, body { margin: 0; overflow: hidden; }
</style>

<style scoped>
* { box-sizing: border-box; }
.screen { width: 1919px; height: 1079px; display: flex; flex-direction: column; overflow: hidden; background: #d3e3fd; font-family: 'Noto Sans', 'Open Sans', sans-serif; font-size: 14px; color: #474747; }
svg { flex: none; display: block; overflow: visible; }
.defs { position: absolute; }
h1, h2, h3, p { margin: 0; }
button { border: 0; padding: 0; font: inherit; color: inherit; display: flex; align-items: center; }
.fit, .url { white-space: nowrap; display: inline-block; }
em, i { font-style: normal; }

.tabstrip { height: 50px; flex: none; display: flex; align-items: flex-start; padding-left: 8px; }
.tab-menu { width: 35px; height: 34px; margin: 8px 6px 0 0; border-radius: 11px; background: #e9f0fe; justify-content: center; }
.tab { position: relative; height: 42px; margin-top: 8px; display: flex; align-items: center; padding-bottom: 8px; flex: none; }
.tab.active { background: #fff; border-radius: 11px 11px 0 0; color: #1f1f1f; }
.tab.active::before, .tab.active::after { content: ''; position: absolute; bottom: 0; width: 12px; height: 12px; }
.tab.active::before { left: -12px; background: radial-gradient(circle at 0 0, transparent 11.5px, #fff 12px); }
.tab.active::after { right: -12px; background: radial-gradient(circle at 100% 0, transparent 11.5px, #fff 12px); }
.favicon { width: 20px; height: 20px; margin-right: 10px; }
.tab-title { width: 211px; overflow: hidden; white-space: nowrap; }
.tab-title.faded { mask-image: linear-gradient(90deg, #000 86%, transparent 100%); }
.tab-close { position: absolute; right: 16px; top: 12px; }
.tab:nth-child(2) .tab-close { right: 20px; }
.tab:nth-child(3) .tab-close { right: 22px; }
.tab:nth-child(5) .tab-close { right: 19px; }
.tab:nth-child(6) .tab-close { right: 20px; }
.tab-line { position: absolute; right: 0; top: 6px; width: 2px; height: 20px; background: #a8c7fa; border-radius: 1px; }
.plus { margin: 18px 0 0 13px; }
.window-buttons { margin: 18px 21px 0 auto; display: flex; gap: 43px; }

.toolbar { height: 50px; flex: none; background: #fff; border-radius: 11px 11px 0 0; display: flex; align-items: center; padding: 8px 0 0 19px; }
.nav-next { margin-left: 28px; }
.nav-reload { margin-left: 28px; }
.omnibox { width: 1462px; height: 42px; flex: none; margin-left: 24px; border-radius: 21px; background: #edf1fa; display: flex; align-items: center; padding-left: 6px; }
.site-info { width: 30px; height: 30px; border-radius: 50%; background: #fff; display: flex; align-items: center; justify-content: center; margin-right: 11px; }
.url { font-size: 16px; color: #474747; }
.url b { font-weight: 400; color: #1f1f1f; }
.translate { margin-left: auto; }
.star { margin: 0 19px 0 20px; }
.ext-brain { margin-left: 23px; }
.ext-phone { margin-left: 26px; }
.ext-fd { width: 21px; height: 21px; margin-left: 25px; background: #111; color: #fff; font: 800 14px/21px 'Noto Sans', sans-serif; text-align: center; letter-spacing: -0.5px; }
.ext-puzzle { margin-left: 25px; }
.bar-line { width: 2px; height: 20px; background: #d3e3fd; border-radius: 1px; flex: none; }
.toolbar .bar-line { margin-left: 20px; }
.profile { margin-left: 20px; }
.dots { margin-left: 29px; }

.bookmarks { height: 51px; flex: none; background: #fff; display: flex; align-items: center; padding-left: 23px; }
.apps { margin-right: 18px; }
.bookmarks .bar-line { margin-right: 18px; }
.mark { display: flex; align-items: center; flex: none; white-space: nowrap; }
.bookmarks .last { margin: 0 20px; }
.mark.all { column-gap: 11px; }

.viewport { height: 869px; flex: none; display: flex; background: #fff; overflow: hidden; font-family: Inter, sans-serif; font-size: 17.5px; color: #343741; }
.page { width: 1899px; display: flex; flex-direction: column; }
.scrollbar { width: 20px; background: #eff0f5; display: flex; flex-direction: column; align-items: center; padding: 10px 0; }
.scrollbar i { width: 17px; height: 702px; margin-top: 6px; background: #adb0b9; }
.up, .dn { border: 5px solid transparent; border-top: 0; border-bottom-color: #a7a9b0; }
.dn { margin-top: auto; border-top: 5px solid #a7a9b0; border-bottom: 0; }

.topbar { height: 59px; flex: none; background: #25282f; display: flex; align-items: center; padding-left: 20px; }
.brand { width: 83px; margin: 0 0 0 9px; color: #fff; font: 300 29px/40px 'Open Sans', 'Noto Sans', sans-serif; }
.global-search { width: 750px; height: 40px; margin-left: 428px; border: 1px solid #6b6d72; border-radius: 5px; display: flex; align-items: center; padding: 0 14px 0 10px; color: #b4b5b9; }
.global-search span { margin-left: 5px; }
.global-search svg { color: #dfe0e3; }
.global-search b { margin-left: auto; font-size: 15px; color: #fff; letter-spacing: 1px; }
.help { margin-left: 434px; color: #fff; }
.news { position: relative; margin-left: 30px; }
.news i { position: absolute; width: 14px; height: 14px; border-radius: 50%; background: #bd3c73; left: 13px; top: -6px; }
.user { width: 30px; height: 30px; margin-left: 24px; border-radius: 50%; background: #6092c0; color: #000; font-size: 15px; line-height: 30px; text-align: center; }

.crumbbar { position: relative; z-index: 3; height: 61px; flex: none; border-top: 1px solid #d3dae6; border-bottom: 1px solid #d3dae6; background: #fff; display: flex; align-items: center; padding-left: 25px; box-shadow: 0 1px 5px rgba(0,0,0,.1), 0 4px 10px rgba(0,0,0,.06); }
.space { width: 30px; height: 30px; margin-left: 25px; border-radius: 7px; background: #00bfb3; color: #000; font-size: 15px; font-weight: 500; line-height: 30px; text-align: center; }
.crumbs { display: flex; margin-left: 20px; font-size: 15px; font-weight: 500; line-height: 30px; }
.crumb { height: 30px; background: #cce4f5; color: #0061a6; }
.crumb.first { width: 178px; padding-left: 15px; border-radius: 6px 0 0 6px; clip-path: polygon(0 0, 164px 0, 100% 50%, 164px 100%, 0 100%); }
.crumb.mid { width: 182px; margin-left: -9px; padding-left: 20px; clip-path: polygon(0 0, 168px 0, 100% 50%, 168px 100%, 0 100%, 10px 50%); }
.crumb.end { width: 86px; margin-left: -10px; padding-left: 20px; border-radius: 0 6px 6px 0; background: #e0e0e2; color: #69707d; clip-path: polygon(0 0, 100% 0, 100% 100%, 0 100%, 10px 50%); }

.banner { height: 155px; flex: none; background: #e6f1fa; padding: 19px 20px 0; }
.banner h2 { font-size: 20px; font-weight: 500; line-height: 32px; color: #0071c2; }
.banner p { display: flex; align-items: center; margin-top: 9px; line-height: 26px; white-space: nowrap; }
.banner b { font-weight: 700; }
.banner .body { margin: 0 4px 0 5px; }
.banner a { color: #0071c2; font-weight: 500; }
.banner p svg { margin: 3px 0 0 5px; color: #0071c2; }
.stop { margin-right: 5px; }
.banner button { width: 140px; height: 40px; margin-top: 9px; border-radius: 5px; background: #cce4f5; color: #0061a6; font-weight: 500; justify-content: center; }

.split { height: 594px; display: flex; }
.side { position: relative; width: 310px; background: #f7f8fc; overflow: hidden; color: #1a1c21; }
.art { position: absolute; left: 0; top: 0; }
.side-scroll { position: absolute; left: 298px; top: 6px; width: 10px; display: flex; flex-direction: column; align-items: center; }
.side-scroll span { border: 3px solid transparent; border-top: 0; border-bottom-color: #a7a9b0; margin-bottom: 5px; }
.side-scroll i { width: 10px; height: 356px; background: #adb0b9; }
.side-body { position: relative; padding: 30px 0 0 30px; display: flex; flex-direction: column; }
.side-head { display: flex; align-items: center; height: 40px; }
.gear { width: 40px; height: 40px; border-radius: 50%; background: #fff; display: flex; align-items: center; justify-content: center; box-shadow: 0 2px 6px rgba(0,0,0,.12); }
.side-title { margin-left: 15px; font-size: 20px; font-weight: 700; }
.side h3 { display: flex; align-items: center; gap: 7px; height: 30px; margin-bottom: 6px; font-size: 17.5px; font-weight: 700; letter-spacing: -0.05px; color: #343741; }
.side h3 svg { margin-top: 2px; }
.g1 { margin-top: 29px; }
.g2 { margin-top: 29px; }
.g3 { margin-top: 29px; }
.side a { height: 35px; line-height: 35px; white-space: nowrap; }
.current { font-weight: 700; color: #0071c2; text-decoration: underline; }
.panel { position: relative; width: 1589px; background: #fff; border-left: 1px solid #d3dae6; box-shadow: 0 0 15px rgba(0,0,0,.2); display: flex; flex-direction: column; }
.content { height: 544px; padding: 25px 30px 0 30px; }
.title-row { display: flex; align-items: center; justify-content: space-between; height: 60px; padding-right: 10px; }
h1 { font-size: 42.5px; font-weight: 700; color: #1a1c21; line-height: 60px; }
.docs { display: flex; align-items: center; gap: 10px; font-weight: 500; color: #0061a6; }
.page-tabs { display: flex; gap: 30px; height: 51px; margin-top: 25px; border-bottom: 1px solid #d3dae6; font-size: 20px; font-weight: 700; color: #1a1c21; line-height: 51px; }
.page-tabs span { padding: 0 5px; height: 51px; white-space: nowrap; }
.page-tabs .on { color: #0071c2; border-bottom: 3px solid #07c; }
.intro { display: flex; align-items: center; height: 30px; margin-top: 30px; }
.intro p { display: flex; align-items: center; margin-right: auto; font-size: 20px; color: #69707d; white-space: pre; }
.intro p a { display: flex; align-items: center; gap: 6px; color: #0071c2; font-weight: 500; }
.intro label { display: flex; align-items: center; margin-left: 29px; gap: 10px; }
.switch { width: 55px; height: 25px; border-radius: 13px; background: #8f9196; display: flex; align-items: center; justify-content: flex-end; padding-right: 10px; position: relative; }
.switch::before { content: ''; position: absolute; left: 0; top: 0; width: 25px; height: 25px; border-radius: 50%; background: #fff; border: 1px solid #8f9196; }
.filters { display: flex; margin-top: 30px; height: 50px; }
.find { width: 751px; flex: none; border: 1px solid #e0e3ea; border-radius: 7px; background: #fbfcfd; display: flex; align-items: center; gap: 9px; padding-left: 14px; color: #69707d; }
.find svg { color: #343741; }
.group { width: 369px; flex: none; margin-left: 20px; border: 1px solid #e0e3ea; border-radius: 7px; background: #fbfcfd; display: flex; }
.group span { flex: 1; display: flex; align-items: center; justify-content: space-between; padding: 0 11px 0 11px; white-space: nowrap; }
.group span + span { border-left: 1px solid #e0e3ea; }
.group em { font-weight: 400; }
.filters button { border-radius: 7px; font-weight: 500; flex: none; }
.filters .reload { width: 182px; margin-left: 20px; background: #ccf2ef; color: #006d64; padding-left: 16px; gap: 12px; }
.filters .create { width: 166px; margin-left: 20px; background: #07c; color: #fff; padding-left: 15px; gap: 11px; }
.table { margin-top: 20px; }
.tr { display: flex; align-items: center; padding-left: 10px; border-bottom: 1px solid #d3dae6; white-space: nowrap; }
.tr > span { flex: none; }
.tr.head { height: 41px; font-size: 15px; font-weight: 600; color: #1a1c21; }
.tr.head span { display: flex; align-items: center; gap: 8px; }
.tr.head .wide { gap: 12px; letter-spacing: -0.12px; }
.tr.row { height: 53px; font-variant-numeric: tabular-nums; }
.box { width: 20px; height: 20px; margin-right: 20px; border: 1px solid #8f9196; border-radius: 4px; flex: none; background: #fff; }
.row .link { color: #0071c2; font-weight: 500; font-variant-numeric: normal; }
.row .health { display: flex; align-items: center; padding: 0 0 5px 5px; }
.dot { width: 10px; height: 10px; border-radius: 50%; background: #8a6a0a; margin-right: 10px; }
.pager { display: flex; align-items: center; margin-top: 24px; height: 30px; padding: 0 11px 0 10px; }
.rows { display: flex; align-items: center; gap: 11px; margin-right: auto; font-size: 15px; letter-spacing: 0.05px; }
.pager b { margin: 0 20px 0 21px; color: #0071c2; text-decoration: underline; }
.console { height: 50px; margin-left: -1px; background: #343741; display: flex; align-items: center; padding-left: 12px; color: #dfe5ef; font-weight: 500; }
.console > span:nth-child(2) { margin-left: 11px; }
.book { margin-left: auto; }
.note { margin: 0 20px 0 11px; color: #7de2d1; font-weight: 600; }
.assistant { position: absolute; right: 0; top: 512px; width: 50px; height: 45px; border-radius: 23px 0 0 23px; background: #fff; display: flex; align-items: center; padding-left: 13px; box-shadow: 0 0 12px rgba(0,0,0,.08); clip-path: inset(-40px 0 -40px -40px); }

.taskbar { height: 59px; flex: none; border-top: 1px solid #b2b8bd; display: flex; align-items: center; background: linear-gradient(90deg, #dfece9 0, #e0eaea 200px, #e0e9f0 310px, #dde9f5 460px, #d9e1ee 800px, #dbeaf3 960px, #dcedf4 1120px, #dbe5f0 1200px, #dcebf2 1400px, #ddeff3 1540px, #e2eaf1 1700px, #e3e9f1 1919px); color: #222; padding-left: 26px; }
.taskbar > * { flex: none; }
.weather { display: flex; flex-direction: column; align-items: flex-start; margin-left: 10px; width: 328px; line-height: 20px; }
.sub { color: #5d6265; }
.task-search { width: 273px; height: 39px; margin-left: 18px; border-radius: 20px; background: #f5f9fd; border: 1px solid #c9d2dc; display: flex; align-items: center; padding-left: 13px; gap: 13px; font-size: 16.5px; color: #5b5e62; }
.apps-row { display: flex; margin-left: 7px; }
.app { position: relative; width: 48px; height: 48px; margin-right: 7px; display: flex; align-items: center; justify-content: center; border-radius: 5px; }
.app.chrome { background: rgba(255,255,255,.6); border: 1px solid rgba(255,255,255,.6); }
.mark-run { display: none; }
.running .mark-run, .chrome .mark-run { display: block; position: absolute; bottom: 0; left: 20px; width: 8px; height: 4px; border-radius: 2px; background: #858c93; }
.chrome .mark-run { left: 13px; width: 20px; background: #5f7e90; bottom: -1px; }
.m365 { position: absolute; left: 18px; top: 29px; width: 21px; color: #fff; font: 700 7px/9px 'Noto Sans', sans-serif; text-align: center; }
.ab { position: absolute; left: 24px; top: 26px; width: 15px; color: #a04a3a; font: 700 7px/9px 'Noto Sans', sans-serif; text-align: center; }
.mini { position: absolute; left: 24px; top: 2px; width: 21px; height: 21px; }
.count { position: absolute; left: 25px; top: 3px; width: 20px; height: 20px; border-radius: 50%; background: #5b7380; color: #fff; font-size: 14px; line-height: 20px; text-align: center; }
.caret { margin-left: 82px; }
.lang { margin-left: 27px; width: 29px; }
.wifi { margin-left: 22px; }
.mute { margin-left: 9px; }
.battery { margin-left: 11px; }
.clock { margin: 0 23px 0 auto; display: flex; flex-direction: column; align-items: flex-end; line-height: 20px; }
</style>
